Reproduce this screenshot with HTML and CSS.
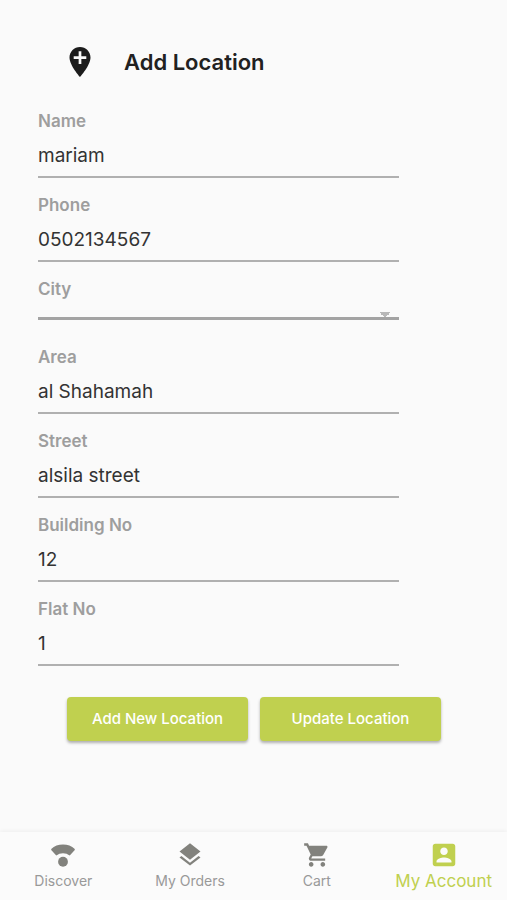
FILE: index.html
```html
<!DOCTYPE html>
<html lang="en">
<head>
    <meta charset="UTF-8">
    <meta name="viewport" content="width=device-width, initial-scale=1.0">
    <title>Add Location</title>
    <link rel="stylesheet" href="styles.css">
</head>
<body>
    <header class="header">
        <svg class="header-icon" viewBox="0 0 24 24" aria-hidden="true">
            <path d="M12 2C8.14 2 5 5.14 5 9c0 5.25 7 13 7 13s7-7.75 7-13c0-3.86-3.14-7-7-7zm4.2 8h-3.3v3.3h-1.8V10H7.8V8.2h3.3V4.9h1.8v3.3h3.3z"/>
        </svg>
        <h1>Add Location</h1>
    </header>

    <main>
        <form id="location-form" class="location-form">
            <div class="field">
                <label for="name">Name</label>
                <input type="text" id="name" name="name" value="mariam">
            </div>
            <div class="field">
                <label for="phone">Phone</label>
                <input type="tel" id="phone" name="phone" value="0502134567">
            </div>
            <div class="field field-city">
                <label for="city">City</label>
                <select id="city" name="city">
                    <option value=""></option>
                </select>
            </div>
            <div class="field">
                <label for="area">Area</label>
                <input type="text" id="area" name="area" value="al Shahamah">
            </div>
            <div class="field">
                <label for="street">Street</label>
                <input type="text" id="street" name="street" value="alsila street">
            </div>
            <div class="field">
                <label for="building">Building No</label>
                <input type="text" id="building" name="building" value="12">
            </div>
            <div class="field">
                <label for="flat">Flat No</label>
                <input type="text" id="flat" name="flat" value="1">
            </div>
        </form>

        <div class="actions">
            <button type="submit" form="location-form">Add New Location</button>
            <button type="button">Update Location</button>
        </div>
    </main>

    <nav class="tabs">
        <a class="tab" href="#discover">
            <svg viewBox="0 0 24 24" aria-hidden="true">
                <path d="M12 3C8 3 4.6 4.3 1.9 6.8V7.7L6.2 12.5C9.4 9.7 14.6 9.7 17.8 12.5L22.1 7.7V6.8C19.4 4.3 16 3 12 3z"/>
                <circle cx="12" cy="17.8" r="4.2"/>
            </svg>
            <span>Discover</span>
        </a>
        <a class="tab" href="#orders">
            <svg viewBox="0 0 24 24" aria-hidden="true">
                <path d="M11.99 18.54l-7.37-5.73L3 14.07l9 7 9-7-1.63-1.27-7.38 5.74zM12 16l7.36-5.73L21 9l-9-7-9 7 1.63 1.27L12 16z"/>
            </svg>
            <span>My Orders</span>
        </a>
        <a class="tab" href="#cart">
            <svg viewBox="0 0 24 24" aria-hidden="true">
                <path d="M7 18c-1.1 0-1.99.9-1.99 2S5.9 22 7 22s2-.9 2-2-.9-2-2-2zM1 2v2h2l3.6 7.59-1.35 2.45c-.16.28-.25.61-.25.96 0 1.1.9 2 2 2h12v-2H7.42c-.14 0-.25-.11-.25-.25l.03-.12.9-1.63h7.45c.75 0 1.41-.41 1.75-1.03l3.58-6.49c.08-.14.12-.31.12-.48 0-.55-.45-1-1-1H5.21l-.94-2H1zm16 16c-1.1 0-1.99.9-1.99 2s.89 2 1.99 2 2-.9 2-2-.9-2-2-2z"/>
            </svg>
            <span>Cart</span>
        </a>
        <a class="tab active" href="#account">
            <svg viewBox="0 0 24 24" aria-hidden="true">
                <path d="M3 5v14c0 1.1.89 2 2 2h14c1.1 0 2-.9 2-2V5c0-1.1-.9-2-2-2H5c-1.11 0-2 .9-2 2zm12 4c0 1.66-1.34 3-3 3s-3-1.34-3-3 1.34-3 3-3 3 1.34 3 3zm-9 8c0-2 4-3.1 6-3.1s6 1.1 6 3.1v1H6v-1z"/>
            </svg>
            <span>My Account</span>
        </a>
    </nav>
</body>
</html>
```

FILE: styles.css
```css
* {
    box-sizing: border-box;
}
body {
    display: flex;
    flex-direction: column;
    min-height: 100vh;
    margin: 0;
    background-color: #fafafa;
    color: #212121;
    font-family: Inter, "Liberation Sans", sans-serif;
}
main {
    flex: 1;
}
.header {
    display: flex;
    align-items: center;
    gap: 26px;
    padding: 44px 62px 30px;
}
.header-icon {
    width: 36px;
    height: 36px;
    fill: #1c1c1c;
}
h1 {
    margin: 0;
    font-size: 22px;
    line-height: 28px;
    font-weight: 600;
}
.location-form {
    display: flex;
    flex-direction: column;
    gap: 16px;
    padding: 0 108px 0 38px;
}
.field {
    display: flex;
    flex-direction: column;
}
.field-city {
    margin-bottom: 10px;
}
label {
    color: #9e9e9e;
    font-size: 17px;
    line-height: 22px;
    font-weight: 600;
}
input, select {
    width: 100%;
    border: none;
    border-bottom: 2px solid #b0b0b0;
    border-radius: 0;
    background: transparent;
    color: #333;
    font-family: inherit;
    font-size: 19px;
    outline: none;
}
input {
    height: 46px;
    padding: 2px 0 0;
}
/* arrow is made of two triangles and runs into the underline */
select {
    appearance: none;
    height: 20px;
    padding: 0;
    border-bottom: 3px solid #a3a3a3;
    background-image: linear-gradient(to bottom right, #b8b8b8 50%, transparent 50%),
                      linear-gradient(to bottom left, #b8b8b8 50%, transparent 50%);
    background-position: right 8px bottom -1px, right 14px bottom -1px;
    background-size: 6px 6px;
    background-repeat: no-repeat;
}
.actions {
    display: flex;
    gap: 12px;
    padding: 31px 66px 31px 67px;
}
button {
    flex: 1;
    height: 44px;
    padding: 0 0 1px;
    border: none;
    border-radius: 4px;
    background: #c0d04f;
    box-shadow: 0 2px 3px rgba(0, 0, 0, 0.3);
    color: #fff;
    font-family: inherit;
    font-size: 15px;
    font-weight: 500;
    cursor: pointer;
}
.tabs {
    display: flex;
    height: 68px;
    background: #fbfbfb;
    box-shadow: 0 -1px 4px rgba(0, 0, 0, 0.05);
}
.tab {
    flex: 1;
    display: flex;
    flex-direction: column;
    align-items: center;
    padding-top: 9px;
    color: #999;
    font-size: 14px;
    line-height: 24px;
    text-decoration: none;
    white-space: nowrap;
}
.tab svg {
    width: 28px;
    height: 28px;
    fill: #82827d;
}
.tab.active {
    color: #c0d04f;
    font-size: 17px;
}
.tab.active svg {
    width: 30px;
    height: 30px;
    margin: -1px 0;
    fill: #c0d04f;
}
```
